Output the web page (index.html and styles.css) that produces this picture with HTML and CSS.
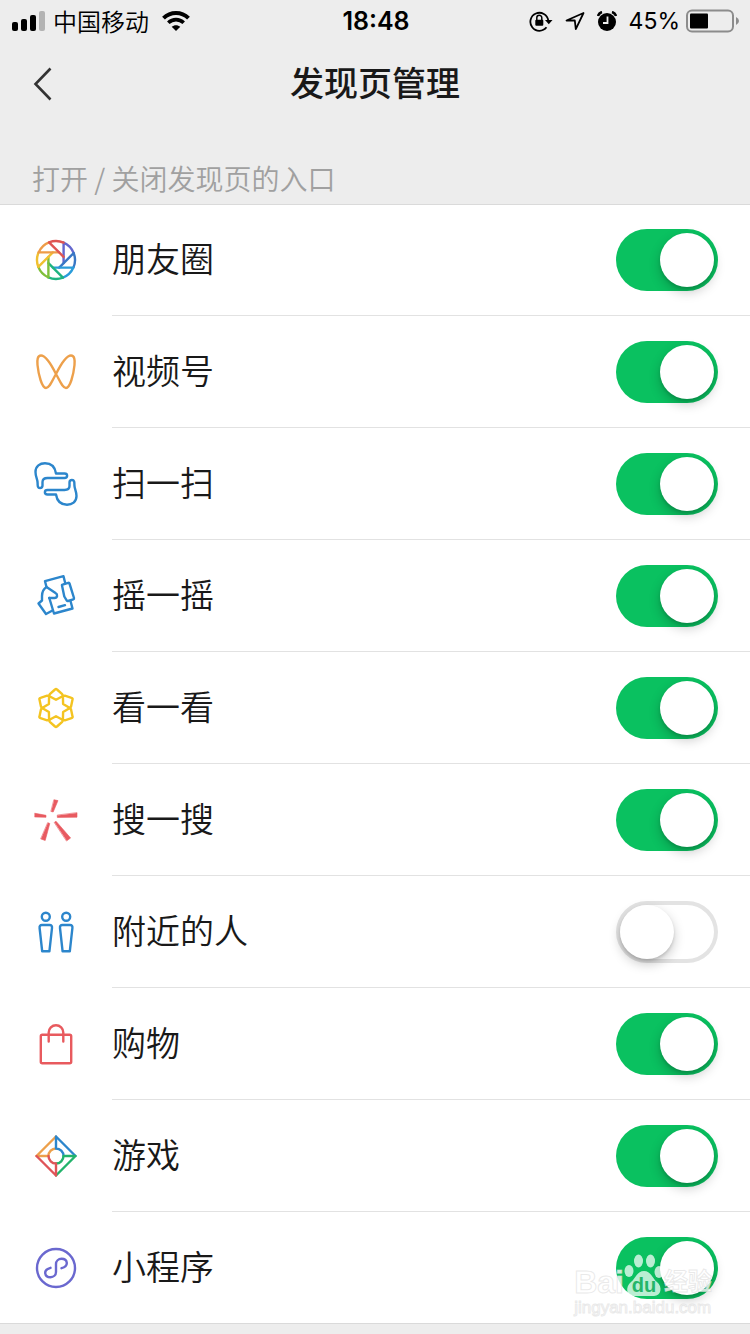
FILE: index.html
```html
<!DOCTYPE html>
<html lang="zh-CN">
<head>
<meta charset="utf-8">
<meta name="viewport" content="width=device-width, initial-scale=1">
<title>发现页管理</title>
<link rel="stylesheet" href="styles.css">
</head>
<body>
<div class="status">
  <div class="status-left">
    <svg class="signal" width="34" height="22" viewBox="0 0 34 22"><rect x="0" y="12" width="6" height="9" rx="2"/><rect x="9" y="9" width="6" height="12" rx="2"/><rect x="18" y="5" width="6" height="16" rx="2"/><rect x="27" y="1" width="6" height="20" rx="2" fill="#b3b3b3"/></svg>
    <span>中国移动</span>
    <svg class="wifi" width="28" height="20" viewBox="0 0 28 20"><path d="M1.500 7.200C8.500 .3 19.500 .3 26.500 7.200" fill="none" stroke="#000" stroke-width="4"/><path d="M6.300 11.800C10.700 7.500 17.300 7.500 21.700 11.800" fill="none" stroke="#000" stroke-width="3.600"/><path d="M14 20l-4.300-4.200c2.400-2.200 6.200-2.200 8.600 0z"/></svg>
  </div>
  <span class="time">18:48</span>
  <div class="status-right">
    <svg width="24" height="22" viewBox="0 0 24 22"><path d="M17.500 17.300A9 9 0 1 1 19.300 10.500" fill="none" stroke="#000" stroke-width="1.800"/><path d="M16 10h7.500l-3.700 4.200z"/><rect x="6.300" y="9.800" width="8" height="6" rx="1"/><path d="M7.800 10V7.800a2.500 2.500 0 0 1 5 0V10" fill="none" stroke="#000" stroke-width="1.500"/></svg>
    <svg width="20" height="20" viewBox="0 0 20 20"><path d="M18.500 2L1.500 9.500h8.300l1 8.700z" fill="none" stroke="#000" stroke-width="1.800" stroke-linejoin="round"/></svg>
    <svg width="20" height="20" viewBox="0 0 20 20"><circle cx="10" cy="11" r="9"/><path d="M1 5A6 6 0 0 1 5 1M15 1a6 6 0 0 1 4 4" fill="none" stroke="#000" stroke-width="2.500"/><path d="M10.500 5.500V12H6" fill="none" stroke="#ededed" stroke-width="1.800"/></svg>
    <span class="percent">45%</span>
    <svg class="battery" width="54" height="24" viewBox="0 0 54 24"><rect x="1" y="1.500" width="46" height="21" rx="5" fill="none" stroke="#8c8c8c" stroke-width="2"/><rect x="4" y="4.500" width="18" height="15" rx="1"/><path d="M50 8q3 1.500 3 4t-3 4z" fill="#8c8c8c"/></svg>
  </div>
</div>
<header class="nav">
  <button class="back" aria-label="返回"><svg width="22" height="36" viewBox="0 0 22 36"><path d="M18.500 2.500L3.500 18l15 15.500" fill="none" stroke="#333" stroke-width="2.600"/></svg></button>
  <h1>发现页管理</h1>
</header>
<p class="hint">打开 / 关闭发现页的入口</p>
<main class="list">
  <label class="row">
    <svg class="icon" viewBox="0 0 48 48">
      <g transform="translate(24 24)">
        <path stroke="#6467ce" d="M7.600-17.400V3.100M7.600-17.400A19 19 0 0 1 17.700-6.900"/>
        <path stroke="#3977c5" transform="rotate(45)" d="M7.600-17.400V3.100M7.600-17.400A19 19 0 0 1 17.700-6.900"/>
        <path stroke="#2a9cda" transform="rotate(90)" d="M7.600-17.400V3.100M7.600-17.400A19 19 0 0 1 17.700-6.900"/>
        <path stroke="#1eb380" transform="rotate(135)" d="M7.600-17.400V3.100M7.600-17.400A19 19 0 0 1 17.700-6.900"/>
        <path stroke="#7fbf3a" transform="rotate(180)" d="M7.600-17.400V3.100M7.600-17.400A19 19 0 0 1 17.700-6.900"/>
        <path stroke="#f0c030" transform="rotate(225)" d="M7.600-17.400V3.100M7.600-17.400A19 19 0 0 1 17.700-6.900"/>
        <path stroke="#ee9c48" transform="rotate(270)" d="M7.600-17.400V3.100M7.600-17.400A19 19 0 0 1 17.700-6.900"/>
        <path stroke="#df5552" transform="rotate(315)" d="M7.600-17.400V3.100M7.600-17.400A19 19 0 0 1 17.700-6.900"/>
      </g>
    </svg>
    <span class="cell"><span class="name">朋友圈</span><input type="checkbox" class="switch" checked></span>
  </label>
  <label class="row">
    <svg class="icon" viewBox="0 0 48 48"><path stroke="#eda04b" d="M24 26C19 16 13.500 7.500 9 7.500C5.500 7.500 5 12 5.500 17C6.500 27 10 40 14 40C17.500 40 20 33 24 26C29 16 34.500 7.500 39 7.500C42.500 7.500 43 12 42.500 17C41.500 27 38 40 34 40C30.500 40 28 33 24 26Z"/></svg>
    <span class="cell"><span class="name">视频号</span><input type="checkbox" class="switch" checked></span>
  </label>
  <label class="row">
    <svg class="icon" viewBox="0 0 48 48"><g stroke="#2c86cc"><path d="M8 28C5.500 28 5.600 25.500 5.600 23C5.600 19 3.500 17 3.500 12C3.500 6 8 3.300 13 3.300C19 3.300 23 7 24 13.500H32.500C36 13.500 36 18 32.500 18H15.500C12 18 10.500 19 10.500 22V25.500C10.500 27.500 9.500 28 8 28Z"/><path transform="rotate(180 24 24)" d="M8 28C5.500 28 5.600 25.500 5.600 23C5.600 19 3.500 17 3.500 12C3.500 6 8 3.300 13 3.300C19 3.300 23 7 24 13.500H32.500C36 13.500 36 18 32.500 18H15.500C12 18 10.500 19 10.500 22V25.500C10.500 27.500 9.500 28 8 28Z"/></g></svg>
    <span class="cell"><span class="name">扫一扫</span><input type="checkbox" class="switch" checked></span>
  </label>
  <label class="row">
    <svg class="icon" viewBox="0 0 48 48"><g stroke="#2c86cc"><path d="M14.500 15L13 9.200L31.500 4.200L33.200 11M38.500 29L40.500 36.500L22 41.500L17.300 26"/><path d="M17.300 26H22.500C25.500 26 26 22.500 23.500 21L14.500 15C11.500 17 10 20 10 24V28.500L6.500 31.500L14 42L20.500 38.500"/><path d="M30 13.500Q29.800 12.800 30.500 12.600L36.300 10.800Q37.200 10.600 37.500 11.500L42 26Q42.200 27 41.300 27.300L36 29Q35.200 29.200 34.800 28.600L32.300 24.500Z"/><path d="M26.500 35L33 33.200"/></g></svg>
    <span class="cell"><span class="name">摇一摇</span><input type="checkbox" class="switch" checked></span>
  </label>
  <label class="row">
    <svg class="icon" viewBox="0 0 48 48"><g stroke="#f4c421"><path d="M23 5.500Q24 4.500 25 5.500L30.200 10.200L31 12L24 15.800L17 12L17.800 10.200Z"/><path transform="rotate(60 24 24)" d="M23 5.500Q24 4.500 25 5.500L30.200 10.200L31 12L24 15.800L17 12L17.800 10.200Z"/><path transform="rotate(120 24 24)" d="M23 5.500Q24 4.500 25 5.500L30.200 10.200L31 12L24 15.800L17 12L17.800 10.200Z"/><path transform="rotate(180 24 24)" d="M23 5.500Q24 4.500 25 5.500L30.200 10.200L31 12L24 15.800L17 12L17.800 10.200Z"/><path transform="rotate(240 24 24)" d="M23 5.500Q24 4.500 25 5.500L30.200 10.200L31 12L24 15.800L17 12L17.800 10.200Z"/><path transform="rotate(300 24 24)" d="M23 5.500Q24 4.500 25 5.500L30.200 10.200L31 12L24 15.800L17 12L17.800 10.200Z"/></g></svg>
    <span class="cell"><span class="name">看一看</span><input type="checkbox" class="switch" checked></span>
  </label>
  <label class="row">
    <svg class="icon" viewBox="0 0 48 48"><g fill="#e85a60" stroke="#e85a60" stroke-width=".6"><path d="M22.200 3.800L26 4.600L21.200 16L19.200 15.500Z"/><path d="M3 17.300L14 19.300V21.300L3 21Z"/><path d="M45 17V21.200L25.300 21.400V19.400Z"/><path d="M9 43L13.200 44.500L17.800 27.500L16 26.800Z"/><path d="M34.800 44.800L38.600 42L24 25.200L22.500 26.300Z"/></g></svg>
    <span class="cell"><span class="name">搜一搜</span><input type="checkbox" class="switch" checked></span>
  </label>
  <label class="row">
    <svg class="icon" viewBox="0 0 48 48"><g stroke="#2c86cc"><circle cx="13.800" cy="8.800" r="4"/><circle cx="34.200" cy="8.800" r="4"/><path d="M10 17H17.600Q20.300 17 20 20L17.400 43.300H10.200L7.600 20Q7.300 17 10 17Z"/><path d="M30.400 17H38Q40.700 17 40.400 20L37.800 43.300H30.600L28 20Q27.700 17 30.400 17Z"/></g></svg>
    <span class="cell"><span class="name">附近的人</span><input type="checkbox" class="switch"></span>
  </label>
  <label class="row">
    <svg class="icon" viewBox="0 0 48 48"><g stroke="#e85a5e"><rect x="8.800" y="14.800" width="30.400" height="28.400" rx="1.500"/><path d="M16.700 21.500V12.500a7.300 7.300 0 0 1 14.600 0V21.500"/></g></svg>
    <span class="cell"><span class="name">购物</span><input type="checkbox" class="switch" checked></span>
  </label>
  <label class="row">
    <svg class="icon" viewBox="0 0 48 48"><path stroke="#eda04b" d="M4.500 24L24 4.500M4.500 24H16.500A7.500 7.500 0 0 1 24 16.500"/><path stroke="#2c86cc" d="M24 4.500L43.500 24M24 4.500V16.500A7.500 7.500 0 0 1 31.500 24"/><path stroke="#22b36b" d="M43.500 24L24 43.500M43.500 24H31.500A7.500 7.500 0 0 1 24 31.500"/><path stroke="#df5458" d="M24 43.500L4.500 24M24 43.500V31.500A7.500 7.500 0 0 1 16.500 24"/></svg>
    <span class="cell"><span class="name">游戏</span><input type="checkbox" class="switch" checked></span>
  </label>
  <label class="row">
    <svg class="icon" viewBox="0 0 48 48"><g stroke="#6a68cf"><circle cx="24" cy="24" r="19"/><path d="M18.500 23.800C10.500 26 12.500 33.200 18.500 33.200C21.500 33.200 24 31 24 28V20C24 17 26.500 14.800 29.500 14.800C35.500 14.800 37.500 22 29.500 24.200"/></g></svg>
    <span class="cell"><span class="name">小程序</span><input type="checkbox" class="switch" checked></span>
  </label>
  <div class="watermark">
    <div class="brand"><span class="latin">Bai</span><svg width="40" height="44" viewBox="0 0 40 44"><g fill="#fff" fill-opacity=".72"><ellipse cx="5" cy="17" rx="4.500" ry="6"/><ellipse cx="14.500" cy="7" rx="4.500" ry="6.500"/><ellipse cx="26.500" cy="7" rx="4.500" ry="6.500"/><ellipse cx="35" cy="18" rx="4.500" ry="6"/><path d="M20 17C27 17 28 24 33 28C39 33 37 42 30 42H10C2 42 1 33 7 28C12 24 13 17 20 17Z"/></g><text class="du" x="20" y="38" text-anchor="middle">du</text></svg><span class="cn">经验</span></div>
    <div class="site">jingyan.baidu.com</div>
  </div>
</main>
</body>
</html>
```
FILE: styles.css
```css
* { box-sizing: border-box; }
body {
  margin: 0;
  min-height: 100vh;
  background: #ededed;
  color: #191919;
  font-family: "Noto Sans CJK SC", sans-serif;
}
.status {
  display: grid;
  grid-template-columns: 1fr auto 1fr;
  align-items: center;
  height: 40px;
  padding: 0 10px 0 12px;
  color: #000;
  font-size: 24px;
  line-height: 40px;
}
.status-left, .status-right { display: flex; align-items: center; }
.status-left { gap: 7px; font-weight: 350; }
.wifi { margin-left: 6px; }
.status-right { justify-content: flex-end; gap: 12px; }
.time, .percent { font-family: Inter, sans-serif; line-height: 42px; }
.time { font-size: 25px; font-weight: 600; }
.percent { font-size: 23px; }
.battery { margin-left: -6px; }
.nav {
  display: grid;
  grid-template-columns: 80px 1fr 80px;
  align-items: center;
  height: 88px;
}
.back {
  display: flex;
  padding: 0 0 0 32px;
  border: 0;
  background: none;
}
h1 {
  margin: 0;
  padding-bottom: 4px;
  text-align: center;
  font-size: 34px;
  line-height: 44px;
  font-weight: 500;
}
.hint {
  margin: 0;
  padding: 30px 32px 6px;
  color: #a0a0a0;
  font-size: 28px;
  line-height: 40px;
  font-weight: 350;
}
.list {
  position: relative;
  background: #fff;
  border-bottom: 1px solid #dadada;
  box-shadow: inset 0 1px #dadada;
}
.row { display: flex; align-items: center; padding-left: 32px; }
.icon {
  flex: none;
  width: 48px;
  height: 48px;
  margin-right: 32px;
  fill: none;
  stroke-width: 2.4;
  stroke-linecap: round;
  stroke-linejoin: round;
}
.cell {
  flex: 1;
  display: flex;
  align-items: center;
  justify-content: space-between;
  height: 112px;
  padding-right: 32px;
  border-bottom: 1px solid #e2e2e2;
}
.row:nth-last-child(2) .cell { height: 111px; border-bottom: 0; }
.name {
  padding-bottom: 4px;
  font-size: 34px;
  line-height: 44px;
  font-weight: 350;
}
.switch {
  appearance: none;
  flex: none;
  display: flex;
  width: 102px;
  height: 62px;
  margin: 0;
  padding: 4px;
  border-radius: 31px;
  background: #fff;
  box-shadow: inset 0 0 0 4px #e3e3e3;
}
.switch::before {
  content: "";
  width: 54px;
  height: 54px;
  border-radius: 50%;
  background: #fff;
  box-shadow: 0 5px 12px rgba(0, 0, 0, .22), 0 2px 3px rgba(0, 0, 0, .12);
}
.switch:checked {
  justify-content: flex-end;
  background: #0ac160;
  box-shadow: none;
}
.watermark {
  position: absolute;
  right: 38px;
  bottom: 5px;
  color: rgba(255, 255, 255, .8);
  font-family: "Liberation Sans", "Noto Sans CJK SC", sans-serif;
  -webkit-text-stroke: 1px rgba(215, 215, 215, .55);
  pointer-events: none;
}
.brand { display: flex; align-items: flex-end; line-height: 32px; font-weight: 700; }
.latin { font-size: 32px; }
.cn { font-size: 24px; }
.du { fill: #25b569; font-size: 20px; font-weight: 700; -webkit-text-stroke: 0; }
.site { font-size: 17px; line-height: 20px; }
```
